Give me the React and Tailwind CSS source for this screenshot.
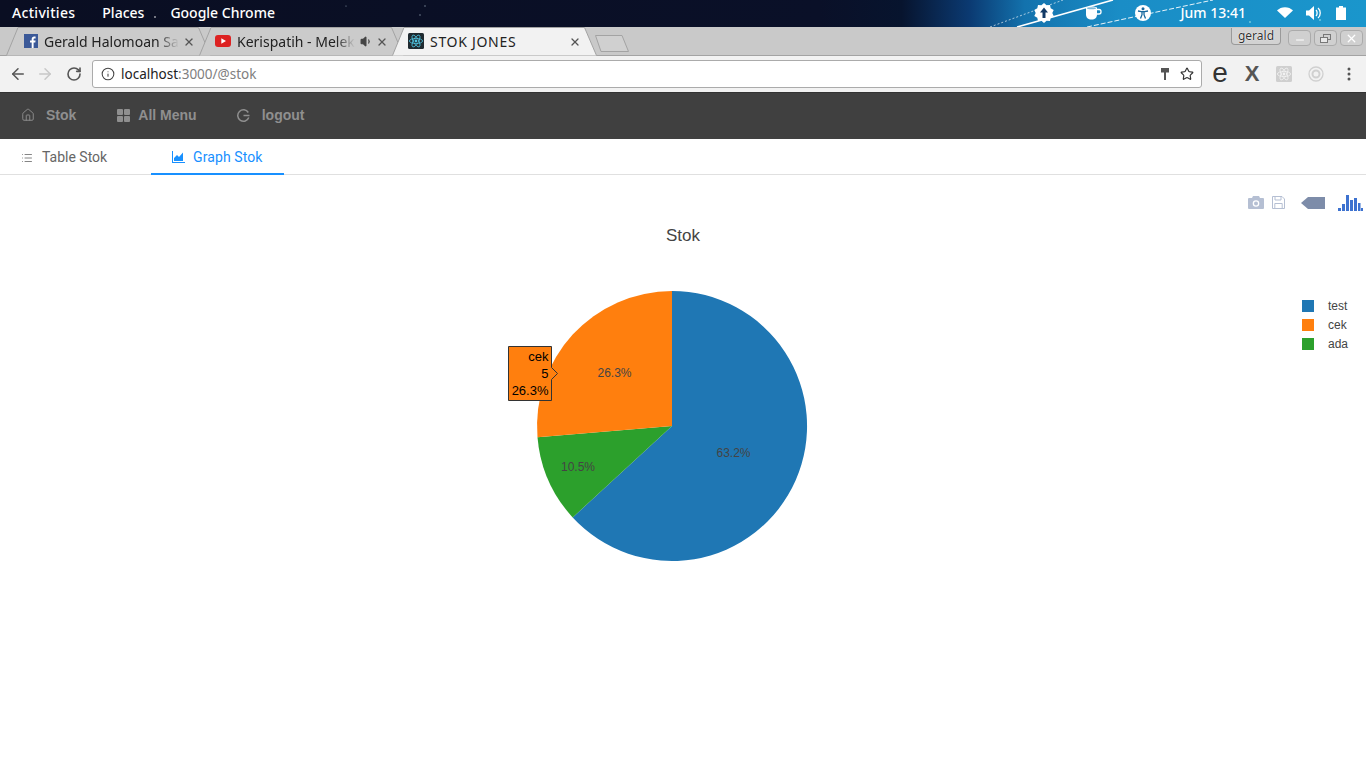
import React from "react";
import { ArrowLeft, ArrowRight, RotateCw, Info, Star, X, House, List, Minus, Volume1 } from "lucide-react";

const ui = "font-['Noto_Sans',sans-serif]";

function ReactMark({ bg, color, size = 16 }) {
  return (
    <svg width={size} height={size} viewBox="0 0 16 16" className="shrink-0">
      <rect width="16" height="16" rx="1.5" fill={bg} />
      <g fill="none" stroke={color} strokeWidth="0.8">
        <ellipse cx="8" cy="8" rx="6.6" ry="2.6" />
        <ellipse cx="8" cy="8" rx="6.6" ry="2.6" transform="rotate(60 8 8)" />
        <ellipse cx="8" cy="8" rx="6.6" ry="2.6" transform="rotate(120 8 8)" />
      </g>
      <circle cx="8" cy="8" r="1.4" fill={color} />
    </svg>
  );
}

function Facebook() {
  return (
    <svg width="14" height="14" viewBox="0 0 14 14" className="shrink-0 ml-px">
      <rect width="14" height="14" fill="#3b5998" />
      <path d="M9.6 14V8.6h1.7l.3-2H9.6V5.4c0-.6.2-1 1-1h1V2.6c-.3 0-.8-.1-1.4-.1-1.5 0-2.5.9-2.5 2.6v1.5H6v2h1.7V14z" fill="#fff" />
    </svg>
  );
}

function Youtube() {
  return (
    <svg width="16" height="12" viewBox="0 0 16 12" className="shrink-0">
      <rect width="16" height="12" rx="3" fill="#dd2222" />
      <path d="M6.3 3.2v5.6L11 6z" fill="#fff" />
    </svg>
  );
}

function Tab({ active, icon, label, speaker, first, fade }) {
  return (
    <div className={`relative h-[29px] w-[205px] shrink-0 flex items-center pb-[1px] ${first ? "" : "-ml-3"} ${active ? "z-10" : ""}`}>
      <svg className="absolute inset-0" width="205" height="29" viewBox="0 0 205 29">
        <path
          d="M0.5 28.5 L12 0.5 H192.5 L204.5 28.5"
          fill={active ? "#f2f2f2" : "#cbcbcb"}
          stroke="#a3a3a3"
        />
      </svg>
      <div className="relative flex items-center h-full w-full pl-4">
        <div className="w-4 flex justify-center shrink-0">{icon}</div>
        <div
          className={`ml-[6px] text-[14px] text-[#222] whitespace-nowrap ${ui} ${
            fade ? "[mask-image:linear-gradient(to_right,black_84%,transparent)]" : "tracking-[0.7px]"
          }`}
        >
          {label}
        </div>
      </div>
      {speaker && <Volume1 size={13} className="absolute left-[161px] top-[8px] text-[#444]" fill="#444" />}
      <X size={12} strokeWidth={2.6} className="absolute left-[177px] top-[9px] text-[#555]" />
    </div>
  );
}

function WinBtn({ children }) {
  return (
    <div className="w-[23px] h-4 rounded-sm border border-[#ababab] bg-[#d0d0d0] flex items-center justify-center text-white">
      {children}
    </div>
  );
}

function CameraIcon() {
  return (
    <svg width="16" height="13" viewBox="0 0 16 13">
      <path fillRule="evenodd" fill="#b5bfd3" d="M1 2h3l1-2h6l1 2h3a1 1 0 0 1 1 1v9a1 1 0 0 1-1 1H1a1 1 0 0 1-1-1V3a1 1 0 0 1 1-1zm7 2.2a3.3 3.3 0 1 0 0 6.6 3.3 3.3 0 0 0 0-6.6zm0 1.3a2 2 0 1 1 0 4 2 2 0 0 1 0-4z" />
    </svg>
  );
}

function SaveIcon() {
  return (
    <svg width="13" height="13" viewBox="0 0 13 13" fill="none" stroke="#b5bfd3" strokeWidth="1">
      <path d="M.5.5h9.5l2.5 2.5v9.5H.5z" />
      <path d="M3 .5v3.5h6V.5M2.8 12.5V7.5h7.4v5" />
    </svg>
  );
}

function TagIcon() {
  return (
    <svg width="24" height="12" viewBox="0 0 24 12">
      <path d="M0 6 L7 0 H24 V12 H7 Z" fill="#7d8ca9" />
    </svg>
  );
}

function PlotlyIcon() {
  return (
    <svg width="25" height="16" viewBox="0 0 25 16" fill="#3d72d0">
      <rect x="0" y="13" width="3" height="3" />
      <rect x="4" y="9" width="3" height="7" />
      <rect x="8" y="0" width="3" height="16" />
      <rect x="12" y="5" width="3" height="11" />
      <rect x="16" y="3" width="3" height="13" />
      <rect x="20" y="8" width="2.5" height="8" />
      <rect x="23" y="13" width="2" height="3" />
    </svg>
  );
}

function PieChart() {
  const lab = { fontFamily: "'Liberation Sans', sans-serif" };
  return (
    <svg width="1366" height="593" viewBox="0 175 1366 593" className="block" style={lab}>
      <text x="683" y="241" textAnchor="middle" fontSize="17" fill="#444">Stok</text>

      <path d="M672 426 L672 291 A135 135 0 1 1 572.7 517.4 Z" fill="#1f77b4" />
      <path d="M672 426 L572.7 517.4 A135 135 0 0 1 537.5 437.2 Z" fill="#2ca02c" />
      <path d="M672 426 L537.5 437.2 A135 135 0 0 1 672 291 Z" fill="#ff7f0e" />

      <text x="733.500" y="457" textAnchor="middle" fontSize="12" fill="#444">63.2%</text>
      <text x="578" y="471" textAnchor="middle" fontSize="12" fill="#444">10.5%</text>
      <text x="614.500" y="377" textAnchor="middle" fontSize="12" fill="#444">26.3%</text>

      <rect x="1302" y="300" width="12" height="12" fill="#1f77b4" />
      <text x="1328" y="310" fontSize="12" fill="#444">test</text>
      <rect x="1302" y="319" width="12" height="12" fill="#ff7f0e" />
      <text x="1328" y="329" fontSize="12" fill="#444">cek</text>
      <rect x="1302" y="338" width="12" height="12" fill="#2ca02c" />
      <text x="1328" y="348" fontSize="12" fill="#444">ada</text>

      <path d="M508.500 346.500 H551.500 V367.500 L557.500 373.500 L551.500 379.500 V400.500 H508.500 Z" fill="#ff7f0e" stroke="#333" />
      <text x="548.500" y="361" textAnchor="end" fontSize="13" fill="#000">cek</text>
      <text x="548.500" y="378" textAnchor="end" fontSize="13" fill="#000">5</text>
      <text x="548.500" y="395" textAnchor="end" fontSize="13" fill="#000">26.3%</text>
    </svg>
  );
}

export default function App() {
  return (
    <div className="w-[1366px] h-[768px] overflow-hidden bg-white flex flex-col">
      {/* GNOME top bar */}
      <div className="relative h-[27px] shrink-0 bg-[linear-gradient(90deg,#0a0e22_0%,#0a1028_60%,#07142e_66%,#0b3a72_71%,#1372ad_75%,#1a8dc6_82%,#1a96cc_100%)] flex items-center text-white text-[14px] font-medium font-['Noto_Sans',sans-serif]">
        <svg className="absolute inset-0" width="1366" height="27" viewBox="0 0 1366 27">
          <path d="M990 27 L1063 0" stroke="#fff" strokeWidth="0.8" strokeDasharray="2 2" fill="none" opacity="0.8" />
          <path d="M1017 27 L1113 0" stroke="#fff" strokeWidth="1.6" fill="none" />
          <path d="M1087 27 L1180 7 L1213 0" stroke="#fff" strokeWidth="1" strokeDasharray="5 2" fill="none" opacity="0.9" />
          <circle cx="1320" cy="20" r="0.7" fill="#cfe" />
          <circle cx="1250" cy="22" r="0.7" fill="#cfe" />
          <circle cx="420" cy="15" r="0.7" fill="#89a" />
          <circle cx="346" cy="6" r="0.6" fill="#89a" />
          <circle cx="425" cy="6" r="0.7" fill="#89a" />
          <circle cx="155" cy="17" r="0.8" fill="#fff" />
        </svg>
        <div className="relative flex items-center w-full h-full pb-[2px]">
          <span className="ml-3 tracking-[0.3px]">Activities</span>
          <span className="ml-[27px]">Places</span>
          <span className="ml-[26px]">Google Chrome</span>
          <div className="ml-auto flex items-center h-full">
            <svg width="20" height="20" viewBox="0 0 20 20" className="mr-[31px]">
              <path d="M10 0l2.6 2.3 3.4-.4.7 3.4 3 1.7L18.300 10l1.400 3-3 1.700-.7 3.400-3.400-.4L10 20l-2.600-2.300-3.400.4-.7-3.400-3-1.700L1.700 10 .3 7l3-1.700.7-3.400 3.400.4z" fill="#fff" />
              <path d="M10 4.500L14 9.500H11.500V15H8.500V9.500H6z" fill="#123a66" />
            </svg>
            <svg width="17" height="14" viewBox="0 0 17 14" className="mr-[33px]">
              <path d="M1 1.500c2-1.500 9-1.500 11 0v7c0 3-2 5-5.500 5S1 11.500 1 8.500z" fill="#fff" />
              <path d="M12 3.500h2a2 2 0 0 1 2 2v.5a2 2 0 0 1-2 2h-2" fill="none" stroke="#fff" strokeWidth="1.300" />
              <ellipse cx="6.500" cy="2.300" rx="4.500" ry="1" fill="#7fb9d9" />
            </svg>
            <svg width="16" height="16" viewBox="0 0 16 16" className="mr-[29px]">
              <circle cx="8" cy="8" r="8" fill="#fff" />
              <circle cx="8" cy="3.800" r="1.500" fill="#17689d" />
              <path d="M3 6l3.500.700h3L13 6M7 6.700v3L5.500 13.500M9 6.700v3l1.500 3.800" stroke="#17689d" strokeWidth="1.300" fill="none" />
            </svg>
            <span className="mr-[31px]">Jum 13:41</span>
            <svg width="16" height="11" viewBox="0 0 16 11" className="mr-[13px]">
              <path d="M0 3.500C4-1 12-1 16 3.500L8 11z" fill="#fff" />
            </svg>
            <svg width="16" height="14" viewBox="0 0 16 14" className="mr-[14px]">
              <path d="M0 4.500h3L8 0v14L3 9.500H0z" fill="#fff" />
              <path d="M10 4c1.500 1.500 1.500 4.500 0 6M12 2c3 2.500 3 7.500 0 10" stroke="#fff" strokeWidth="1.300" fill="none" />
            </svg>
            <svg width="10" height="14" viewBox="0 0 10 14" className="mr-[20px]">
              <path d="M3 0h4v1.500h3V14H0V1.500h3z" fill="#fff" />
            </svg>
          </div>
        </div>
      </div>

      {/* Chrome tab strip */}
      <div className="relative h-[29px] shrink-0 bg-[#c9c9c9] border-b border-[#a3a3a3] flex items-start pl-[6px]">
        <div className="flex items-start">
          <Tab first fade icon={<Facebook />} label="Gerald Halomoan Sa" />
          <Tab fade icon={<Youtube />} label="Kerispatih - Melek" speaker />
          <Tab active icon={<ReactMark bg="#1f2a30" color="#4fc3e0" />} label="STOK JONES" />
        </div>
        <svg width="36" height="19" viewBox="0 0 36 19" className="mt-[7px] -ml-[3px]">
          <path d="M1.500 1.500H28L34.500 17.500H7z" fill="#d0d0d0" stroke="#a3a3a3" />
        </svg>
        <div className="absolute right-[3px] top-[1px] flex items-start">
          <div className="w-[50px] h-[17px] mr-[7px] rounded-b-[4px] border border-t-0 border-[#9a9a9a] bg-[#d2d2d2] flex items-center justify-center text-[12px] text-[#333] font-['Noto_Sans',sans-serif] [text-shadow:0_0_1px_#fff,0_0_1px_#fff]">
            gerald
          </div>
          <div className="flex gap-[3px] mt-[2px]">
            <WinBtn><Minus size={12} strokeWidth={2} className="mt-1" /></WinBtn>
            <WinBtn>
              <svg width="11" height="9" viewBox="0 0 11 9" fill="none" stroke="#777">
                <rect x="3.500" y="0.500" width="7" height="5" />
                <rect x="0.500" y="3.500" width="7" height="5" fill="#e8e8e8" />
              </svg>
            </WinBtn>
            <WinBtn><X size={13} strokeWidth={2.4} /></WinBtn>
          </div>
        </div>
      </div>

      {/* Chrome toolbar */}
      <div className="h-[36px] shrink-0 bg-[#f2f2f2] flex items-center">
        <ArrowLeft size={18} strokeWidth={2} className="ml-[9px] text-[#555]" />
        <ArrowRight size={18} strokeWidth={2} className="ml-[9px] text-[#c8c8c8]" />
        <RotateCw size={16} strokeWidth={2.4} className="ml-[12px] text-[#555]" />
        <div className={`ml-[10px] w-[1110px] h-[28px] rounded-[3px] bg-white border border-[#ababab] flex items-center text-[13.5px] ${ui}`}>
          <Info size={14} strokeWidth={1.8} className="ml-2 text-[#444]" />
          <span className="ml-[6px] text-[#222]">localhost</span>
          <span className="text-[#808080]">:3000/@stok</span>
          <svg width="8" height="12" viewBox="0 0 8 12" className="ml-auto mr-[11px]">
            <path d="M0 0h8v4.500H5V12H3V4.500H0z" fill="#555" />
          </svg>
          <Star size={14} strokeWidth={2} className="mr-[7px] text-[#333]" />
        </div>
        <span className="w-[36px] text-center text-[28px] leading-none text-[#333] font-['Liberation_Sans',sans-serif] -mt-[3px]">e</span>
        <span className="w-[28px] text-center text-[22px] leading-none font-bold text-[#555] font-['Liberation_Sans',sans-serif]">X</span>
        <div className="w-[36px] flex justify-center">
          <ReactMark bg="#cfcfcf" color="#f2f2f2" />
        </div>
        <svg width="16" height="16" viewBox="0 0 16 16" fill="none" stroke="#d0d0d0" strokeWidth="1.300" className="ml-[6px]">
          <circle cx="8" cy="8" r="7" />
          <circle cx="8" cy="8" r="3.500" strokeWidth="2" />
        </svg>
        <svg width="4" height="14" viewBox="0 0 4 14" fill="#555" className="ml-[23px]">
          <circle cx="2" cy="2" r="1.500" />
          <circle cx="2" cy="7" r="1.500" />
          <circle cx="2" cy="12" r="1.500" />
        </svg>
      </div>

      {/* App nav */}
      <div className="h-[47px] shrink-0 bg-[#404040] border-t border-[#333] pb-[2px] flex items-center text-[14px] font-bold text-[#8f8f8f] font-['Liberation_Sans',sans-serif]">
        <House size={14} strokeWidth={1.6} className="ml-[21px]" />
        <span className="ml-[11px]">Stok</span>
        <div className="ml-[41px] grid grid-cols-2 gap-[1px]">
          <div className="w-[6px] h-[6px] rounded-[1px] bg-[#8f8f8f]" />
          <div className="w-[6px] h-[6px] rounded-[1px] bg-[#8f8f8f]" />
          <div className="w-[6px] h-[6px] rounded-[1px] bg-[#8f8f8f]" />
          <div className="w-[6px] h-[6px] rounded-[1px] bg-[#8f8f8f]" />
        </div>
        <span className="ml-2">All Menu</span>
        <svg width="13" height="13" viewBox="0 0 13 13" fill="none" stroke="#8f8f8f" strokeWidth="1.500" className="ml-10">
          <path d="M11.300 3.500A5.700 5.700 0 1 0 11.800 8.500" />
          <path d="M6.500 6.500H12.500" />
        </svg>
        <span className="ml-3">logout</span>
      </div>

      {/* Tabs */}
      <div className="h-[36px] shrink-0 border-b border-[#e0e0e0] flex text-[14px] font-['Roboto',sans-serif]">
        <div className="w-[151px] flex items-center pl-[21px] pt-[2px] text-[#666]">
          <List size={12} strokeWidth={1.6} />
          <span className="ml-[9px]">Table Stok</span>
        </div>
        <div className="w-[133px] h-[36px] border-b-2 border-[#1890ff] flex items-center pl-[21px] pt-[2px] text-[#1890ff]">
          <svg width="13" height="12" viewBox="0 0 13 12" fill="#1890ff">
            <path d="M0 0h1v11h12v1H0z" />
            <path d="M2 10V7l3-3 2 2 4-4.500V10z" />
          </svg>
          <span className="ml-2 tracking-[0.1px]">Graph Stok</span>
        </div>
      </div>

      {/* Chart */}
      <div className="relative flex-1">
        <PieChart />
        <div className="absolute right-[3px] top-[20px] flex items-start">
          <div className="mt-px"><CameraIcon /></div>
          <div className="ml-2 mt-px"><SaveIcon /></div>
          <div className="ml-4 mt-[2px]"><TagIcon /></div>
          <div className="ml-[13px]"><PlotlyIcon /></div>
        </div>
      </div>
    </div>
  );
}
